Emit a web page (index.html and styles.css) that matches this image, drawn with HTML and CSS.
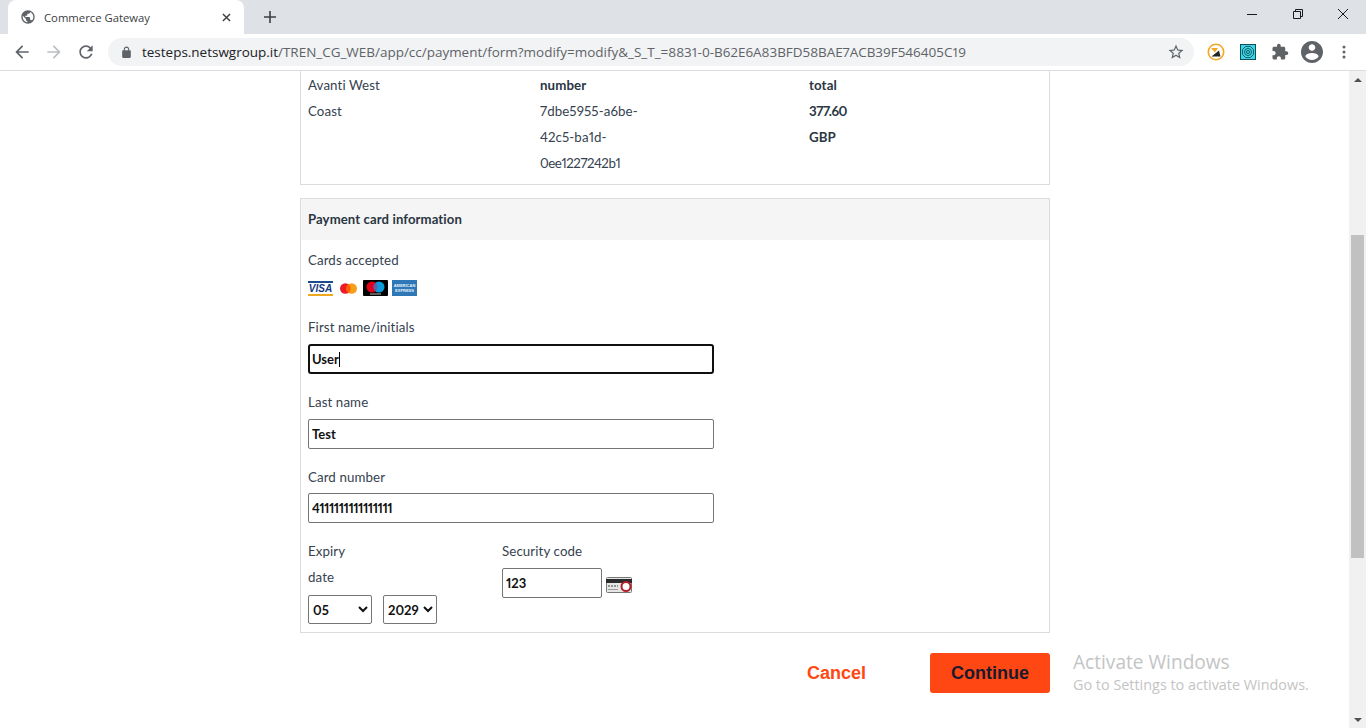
FILE: index.html
```html
<!DOCTYPE html>
<html lang="en">
<head>
<meta charset="utf-8">
<title>Commerce Gateway</title>
<link rel="stylesheet" href="styles.css">
</head>
<body>
<header class="chrome">
  <div class="tabstrip">
    <div class="tab">
      <svg class="ico16" viewBox="0 0 24 24"><path fill="#5f6368" d="M12 2C6.48 2 2 6.48 2 12s4.48 10 10 10 10-4.48 10-10S17.52 2 12 2zm-1 17.93c-3.95-.49-7-3.85-7-7.93 0-.62.08-1.21.21-1.79L9 15v1c0 1.1.9 2 2 2v1.93zm6.9-2.54c-.26-.81-1-1.39-1.9-1.39h-1v-3c0-.55-.45-1-1-1H8v-2h2c.55 0 1-.45 1-1V7h2c1.1 0 2-.9 2-2v-.41c2.93 1.19 5 4.06 5 7.41 0 2.08-.8 3.97-2.1 5.39z"/></svg>
      <span class="tab-title">Commerce Gateway</span>
      <svg class="tab-close" viewBox="0 0 10 10"><path d="M1 1l8 8M9 1l-8 8" stroke="#3c4043" stroke-width="1.6" fill="none"/></svg>
    </div>
    <svg class="new-tab" viewBox="0 0 12 12"><path d="M6 0v12M0 6h12" stroke="#3c4043" stroke-width="1.6" fill="none"/></svg>
    <div class="win-controls">
      <svg class="win-btn" viewBox="0 0 10 10"><path d="M0 5.500h10" stroke="#1a1a1a" fill="none"/></svg>
      <svg class="win-btn" viewBox="0 0 10 10"><path d="M.5 2.500h7v7h-7zM2.500 2.500v-2h7v7h-2" stroke="#1a1a1a" fill="none"/></svg>
      <svg class="win-btn" viewBox="0 0 10 10"><path d="M0 0l10 10M10 0L0 10" stroke="#1a1a1a" fill="none"/></svg>
    </div>
  </div>
  <div class="toolbar">
    <svg class="nav" viewBox="0 0 24 24"><path fill="#5f6368" d="M20 11H7.830l5.590-5.590L12 4l-8 8 8 8 1.410-1.410L7.830 13H20v-2z"/></svg>
    <svg class="nav" viewBox="0 0 24 24"><path fill="#bcc0c4" d="M4 11h12.170l-5.590-5.590L12 4l8 8-8 8-1.410-1.410L16.170 13H4v-2z"/></svg>
    <svg class="nav" viewBox="0 0 24 24"><path fill="#5f6368" d="M17.650 6.350C16.200 4.900 14.210 4 12 4c-4.420 0-7.990 3.580-7.990 8s3.570 8 7.990 8c3.730 0 6.840-2.550 7.730-6h-2.080c-.82 2.330-3.040 4-5.650 4-3.310 0-6-2.690-6-6s2.690-6 6-6c1.660 0 3.140.69 4.220 1.780L13 11h7V4l-2.350 2.350z"/></svg>
    <div class="omnibox">
      <svg class="lock" viewBox="0 0 24 24"><path fill="#5f6368" d="M18 8h-1V6c0-2.760-2.240-5-5-5S7 3.240 7 6v2H6c-1.100 0-2 .9-2 2v10c0 1.100.9 2 2 2h12c1.100 0 2-.9 2-2V10c0-1.100-.9-2-2-2zM9 6c0-1.660 1.340-3 3-3s3 1.340 3 3v2H9V6z"/></svg>
      <span class="url"><b class="host">testeps.netswgroup.it</b>/TREN_CG_WEB/app/cc/payment/form?modify=modify&amp;_S_T_=8831-0-B62E6A83BFD58BAE7ACB39F546405C19</span>
      <svg class="star" viewBox="0 0 24 24"><path fill="#5f6368" d="M22 9.240l-7.190-.62L12 2 9.190 8.630 2 9.240l5.460 4.730L5.820 21 12 17.270 18.180 21l-1.630-7.030L22 9.240zM12 15.400l-3.760 2.270 1-4.280-3.320-2.880 4.380-.38L12 6.100l1.710 4.040 4.380.38-3.320 2.880 1 4.280L12 15.400z"/></svg>
    </div>
    <div class="extensions">
      <svg class="ext-a" viewBox="0 0 18 18"><circle cx="9" cy="9" r="7.700" fill="#fff" stroke="#f5a623" stroke-width="1.600"/><path d="M4 5h7l-3 4.500z" fill="#f5a623"/><path d="M4.500 13.500l7.500-6 1.500 6z" fill="#222"/></svg>
      <svg class="ext-b" viewBox="0 0 16 16"><rect x=".5" y=".5" width="15" height="15" fill="#3fd5e0" stroke="#0d4f5c"/><path d="M5.500 2.500h5l3 3v5l-3 3h-5l-3-3v-5z" fill="none" stroke="#0d5f70"/><circle cx="8" cy="8" r="3.500" fill="none" stroke="#0d5f70"/><circle cx="8" cy="8" r="1.500" fill="none" stroke="#0d5f70"/></svg>
      <svg class="ext-c" viewBox="0 0 24 24"><path fill="#5f6368" d="M20.500 11H19V7c0-1.100-.9-2-2-2h-4V3.500C13 2.120 11.880 1 10.500 1S8 2.120 8 3.500V5H4c-1.100 0-1.990.9-1.990 2v3.800H3.500c1.490 0 2.700 1.210 2.700 2.700s-1.210 2.700-2.700 2.700H2V20c0 1.100.9 2 2 2h3.800v-1.500c0-1.490 1.210-2.700 2.700-2.700 1.490 0 2.700 1.210 2.700 2.700V22H17c1.100 0 2-.9 2-2v-4h1.500c1.380 0 2.500-1.120 2.500-2.500S21.880 11 20.500 11z"/></svg>
      <svg class="ext-d" viewBox="2 2 20 20"><path fill="#5f6368" d="M12 2C6.480 2 2 6.480 2 12s4.480 10 10 10 10-4.480 10-10S17.520 2 12 2zm0 3c1.660 0 3 1.340 3 3s-1.340 3-3 3-3-1.340-3-3 1.340-3 3-3zm0 14.200c-2.500 0-4.710-1.280-6-3.220.03-1.990 4-3.080 6-3.080 1.990 0 5.970 1.090 6 3.080-1.290 1.940-3.500 3.220-6 3.220z"/></svg>
      <svg class="ext-e" viewBox="0 0 4 14"><circle cx="2" cy="2" r="1.500" fill="#5f6368"/><circle cx="2" cy="7" r="1.500" fill="#5f6368"/><circle cx="2" cy="12" r="1.500" fill="#5f6368"/></svg>
    </div>
  </div>
</header>
<div class="viewport">
  <main class="page">
    <section class="panel panel-top">
      <div class="col col-1"><p>Avanti West</p><p>Coast</p></div>
      <div class="col col-2"><p class="strong">number</p><p>7dbe5955-a6be-</p><p>42c5-ba1d-</p><p class="num">0ee1227242b1</p></div>
      <div class="col col-3"><p class="strong">total</p><p class="strong num">377.60</p><p class="strong">GBP</p></div>
    </section>
    <section class="panel panel-form">
      <h2 class="panel-head">Payment card information</h2>
      <div class="panel-body">
        <p>Cards accepted</p>
        <div class="cards">
          <svg class="card-visa" viewBox="0 0 25 15"><rect width="25" height="15" fill="#fff"/><rect width="25" height="2" fill="#1a4b8c"/><rect y="13" width="25" height="2" fill="#f0a81e"/><text x="12.500" y="11.200" text-anchor="middle" class="visa-text">VISA</text></svg>
          <svg class="card-mc" viewBox="0 0 19 12"><circle cx="6" cy="6" r="6" fill="#eb1c26"/><circle cx="13" cy="6" r="6" fill="#f79e1b"/><path d="M9.500 1.100a6 6 0 0 1 0 9.800a6 6 0 0 1 0-9.800z" fill="#ff5f00"/></svg>
          <svg class="card-maestro" viewBox="0 0 25 16"><rect width="25" height="16" rx="1" fill="#000"/><circle cx="9" cy="7" r="5.500" fill="#e3001b"/><circle cx="16" cy="7" r="5.500" fill="#0a9ddb"/><path d="M12.500 2.700a5.500 5.500 0 0 1 0 8.600a5.500 5.500 0 0 1 0-8.600z" fill="#6a5aa8"/><rect x="7" y="13.500" width="11" height="1" fill="#bbb"/></svg>
          <svg class="card-amex" viewBox="0 0 25 16"><rect width="25" height="16" fill="#2e78b8"/><text x="12.500" y="6.500" text-anchor="middle" class="amex-text">AMERICAN</text><text x="12.500" y="12" text-anchor="middle" class="amex-text">EXPRESS</text></svg>
        </div>
        <label class="field-label first">First name/initials</label>
        <div class="input-wrap">
          <input class="input input-wide input-focus" type="text" value="User">
          <span class="caret"></span>
        </div>
        <label class="field-label">Last name</label>
        <input class="input input-wide" type="text" value="Test">
        <label class="field-label label-card">Card number</label>
        <input class="input input-wide input-num" type="text" value="4111111111111111">
        <div class="bottom-row">
          <div class="expiry">
            <p>Expiry</p>
            <p>date</p>
            <div class="selects">
              <select class="sel sel-month"><option>05</option></select>
              <select class="sel sel-year"><option>2029</option></select>
            </div>
          </div>
          <div class="security">
            <p>Security code</p>
            <div class="cvv-row">
              <input class="input input-cvv" type="text" value="123">
              <svg class="cvv-icon" viewBox="0 0 26 16"><rect x=".5" y=".5" width="25" height="15" rx="1" fill="#e6e6e6" stroke="#777"/><rect y="2" width="26" height="4" fill="#2b2b2b"/><path d="M2 9h10" stroke="#777" stroke-width="1.500" stroke-dasharray="2 1"/><path d="M2 12.500h10" stroke="#999"/><circle cx="20" cy="9.500" r="4.500" fill="#fff" stroke="#b3202a" stroke-width="2"/></svg>
            </div>
          </div>
        </div>
      </div>
    </section>
    <div class="actions">
      <a class="cancel">Cancel</a>
      <button class="continue" type="button">Continue</button>
    </div>
  </main>
  <aside class="scrollbar">
    <div class="arrow arrow-up"></div>
    <div class="track"><div class="thumb"></div></div>
    <div class="arrow arrow-down"></div>
  </aside>
  <div class="watermark">
    <div class="wm-title">Activate Windows</div>
    <div class="wm-sub">Go to Settings to activate Windows.</div>
  </div>
</div>
</body>
</html>
```
FILE: styles.css
```css
* { box-sizing: border-box; }
html, body { margin: 0; padding: 0; height: 728px; overflow: hidden; background: #fff; }
body { display: flex; flex-direction: column; font-family: "Lato", "Liberation Sans", sans-serif; font-size: 13.3px; letter-spacing: .1px; font-variant-numeric: proportional-nums; color: #364250; }
p { margin: 0; line-height: 26px; }
.num { letter-spacing: -.45px; }

.chrome { flex: none; height: 71px; font-family: "Open Sans", "Noto Sans", sans-serif; letter-spacing: 0; }
.tabstrip { height: 34px; background: #dee1e6; display: flex; align-items: center; padding-left: 8px; }
.tab { width: 236px; height: 34px; background: #fff; border-radius: 8px 8px 0 0; display: flex; align-items: center; padding: 0 12px; gap: 8px; }
.ico16 { width: 16px; height: 16px; flex: none; }
.tab-title { flex: 1; font-size: 11.300px; color: #3c4043; white-space: nowrap; }
.tab-close { width: 9px; height: 9px; flex: none; margin-right: 1px; }
.new-tab { width: 12px; height: 12px; margin-left: 20px; flex: none; }
.win-controls { margin-left: auto; display: flex; gap: 35.500px; padding-right: 18px; align-items: center; height: 28px; margin-top: -6px; }
.win-btn { width: 10px; height: 10px; }

.toolbar { height: 37px; background: #fff; border-bottom: 1px solid #dadce0; display: flex; align-items: center; padding: 0 0 0 12px; }
.nav { width: 20px; height: 20px; margin-right: 12px; flex: none; }
.omnibox { width: 1086px; height: 28px; background: #f1f3f4; border-radius: 14px; display: flex; align-items: center; padding: 0 9px 0 12px; }
.lock { width: 13px; height: 13px; flex: none; }
.url { flex: 1; margin-left: 9px; font-size: 13.480px; color: #5f6368; white-space: nowrap; }
.host { font-weight: 400; color: #202124; }
.star { width: 18px; height: 18px; flex: none; }
.extensions { display: flex; align-items: center; margin-left: 13px; }
.ext-a { width: 18px; height: 18px; }
.ext-b { width: 16px; height: 16px; margin-left: 15px; }
.ext-c { width: 18px; height: 18px; margin-left: 15px; }
.ext-d { width: 22px; height: 22px; margin-left: 12px; }
.ext-e { width: 4px; height: 14px; margin-left: 19px; }

.viewport { flex: 1; display: flex; min-height: 0; position: relative; }
.page { flex: 1; padding-left: 300px; min-width: 0; }
.panel { width: 750px; border: 1px solid #dcdcdc; }
.panel-top { display: flex; border-top: 0; height: 114px; padding: 1px 7px 0; }
.col-1 { width: 232px; }
.col-2 { width: 269px; }
.strong { font-weight: 700; color: #2a3642; }
.panel-form { margin-top: 13px; height: 435px; }
.panel-head { margin: 0; height: 41px; background: #f5f5f5; font-size: 13.150px; font-weight: 700; color: #2a3642; line-height: 41px; padding-left: 7px; }
.panel-body { padding: 7px 7px 0; display: flex; flex-direction: column; align-items: flex-start; }
.cards { display: flex; align-items: center; gap: 5px; height: 16px; margin-top: 7px; }
.card-visa { width: 25px; height: 15px; }
.card-mc { width: 17px; height: 11px; margin-left: 2px; }
.card-maestro { width: 25px; height: 16px; margin-left: 1px; }
.card-amex { width: 25px; height: 16px; margin-left: -1px; }
.visa-text { font: italic 700 10px "Liberation Sans", sans-serif; letter-spacing: 0; fill: #14387f; }
.amex-text { font: 700 4px "Liberation Sans", sans-serif; letter-spacing: 0; fill: #e8f2fa; }
.field-label { display: block; line-height: 26px; margin-top: 15px; margin-bottom: 4px; }
.field-label.first { margin-top: 18px; }
.field-label.label-card { margin-bottom: 3px; }
.input-wrap { position: relative; }
.input { display: block; height: 30px; border: 1px solid #767676; border-radius: 2px; background: #fff; padding: 0 3px; font-family: "Lato", "Liberation Sans", sans-serif; font-size: 13px; font-weight: 700; font-variant-numeric: proportional-nums; color: #111; outline: none; }
.input-wide { width: 406px; }
.input-num { letter-spacing: -.5px; }
.input-focus { border: 2px solid #101010; border-radius: 3px; padding: 0 2px; }
.caret { position: absolute; left: 31px; top: 8px; width: 1px; height: 15px; background: #000; }
.bottom-row { display: flex; margin-top: 15px; }
.expiry { width: 194px; }
.selects { display: flex; gap: 11px; margin-top: 5px; }
.sel { height: 29px; border: 1px solid #767676; border-radius: 2px; background: #fff; font-family: "Lato", "Liberation Sans", sans-serif; font-size: 13px; font-weight: 700; font-variant-numeric: proportional-nums; color: #111; padding: 0; }
.sel-month { width: 64px; }
.sel-year { width: 54px; }
.cvv-row { display: flex; align-items: center; gap: 4px; margin-top: 4px; }
.input-cvv { width: 100px; }
.cvv-icon { width: 26px; height: 16px; margin-top: 3px; }

.actions { width: 750px; margin-top: 20px; display: flex; justify-content: flex-end; align-items: center; font-family: "Liberation Sans", Arial, sans-serif; font-weight: 700; font-size: 18px; letter-spacing: 0; }
.cancel { color: #ff4713; margin-right: 64px; }
.continue { width: 120px; height: 40px; border: 0; border-radius: 3px; background: #ff4713; color: #1a1a2e; font: inherit; padding: 0; }

.scrollbar { flex: none; width: 17px; background: #f1f1f1; display: flex; flex-direction: column; }
.arrow { flex: none; height: 17px; display: flex; justify-content: center; align-items: center; }
.arrow::before { content: ""; border-left: 4px solid transparent; border-right: 4px solid transparent; }
.arrow-up::before { border-bottom: 4px solid #505050; }
.arrow-down::before { border-top: 4px solid #505050; }
.track { flex: 1; padding: 147px 2px 0; }
.thumb { height: 323px; background: #c1c1c1; }

.watermark { position: absolute; left: 1073px; top: 579px; font-family: "Open Sans", "Noto Sans", sans-serif; color: #c4c4c4; white-space: nowrap; letter-spacing: 0; }
.wm-title { font-size: 19.100px; line-height: 25px; }
.wm-sub { font-size: 14.400px; line-height: 20px; }
```
